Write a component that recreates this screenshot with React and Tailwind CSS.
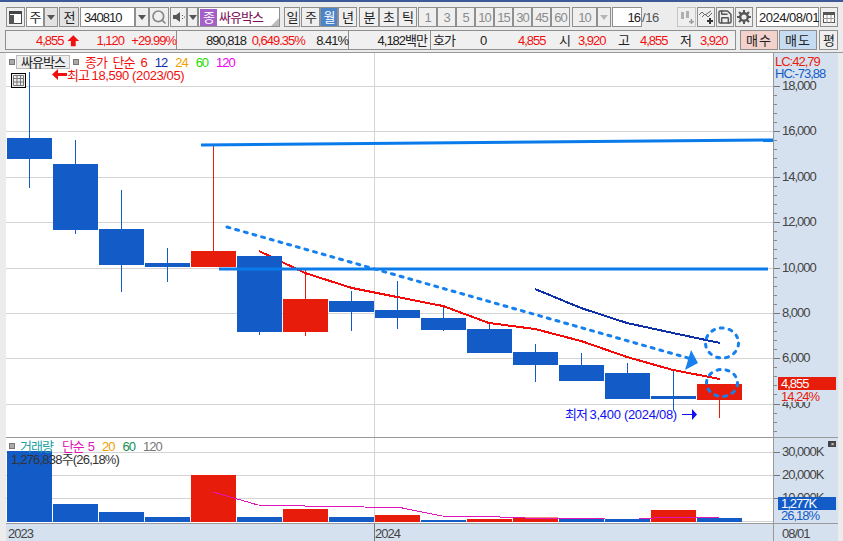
import { Search, Save } from 'lucide-react';

const BLUE = '#135cc8';
const RED = '#e81c0a';

const candles = [
    { x: 7, top: 138, bottom: 159, wick: [72, 188], c: BLUE },
    { x: 53, top: 164, bottom: 230, wick: [140, 234], c: BLUE },
    { x: 99, top: 229, bottom: 265, wick: [190, 292], c: BLUE },
    { x: 145, top: 263, bottom: 267, wick: [248, 282], c: BLUE },
    { x: 191, top: 251, bottom: 267, wick: [145, 267], c: RED },
    { x: 237, top: 256, bottom: 332, wick: [256, 335], c: BLUE },
    { x: 283, top: 299, bottom: 332, wick: [270, 336], c: RED },
    { x: 329, top: 301, bottom: 312, wick: [291, 331], c: BLUE },
    { x: 375, top: 310, bottom: 318, wick: [281, 329], c: BLUE },
    { x: 421, top: 318, bottom: 330, wick: [306, 331], c: BLUE },
    { x: 467, top: 329, bottom: 353, wick: [323, 353], c: BLUE },
    { x: 513, top: 352, bottom: 365, wick: [344, 382], c: BLUE },
    { x: 559, top: 365, bottom: 381, wick: [353, 381], c: BLUE },
    { x: 605, top: 373, bottom: 399, wick: [363, 399], c: BLUE },
    { x: 651, top: 396, bottom: 399, wick: [370, 410], c: BLUE },
    { x: 697, top: 384, bottom: 400, wick: [384, 418], c: RED },
];

const volumes = [
    [7, 451, BLUE], [53, 504, BLUE], [99, 512, BLUE], [145, 517, BLUE],
    [191, 475, RED], [237, 517, BLUE], [283, 509, RED], [329, 517, BLUE],
    [375, 515, RED], [421, 520, BLUE], [467, 519, RED], [513, 517.5, RED],
    [559, 518, BLUE], [605, 519, BLUE], [651, 510, RED], [697, 518, BLUE],
];

const priceGrid = [86, 131, 177, 222, 268, 313, 358, 404];
const priceLabels = ['18,000', '16,000', '14,000', '12,000', '10,000', '8,000', '6,000', '4,000'];
const volumeGrid = [452, 475, 498];
const volumeLabels = ['30,000K', '20,000K', '10,000K'];

function Btn({ w, bg = 'bg-[#efefef]', line = 'border-[#8f8f8f]', className = '', children }) {
    return (
        <div
            className={`flex h-[20px] shrink-0 items-center justify-center border ${line} ${bg} ${className}`}
            style={{ width: w }}
        >
            {children}
        </div>
    );
}

function Caret({ muted }) {
    return <div className={`h-0 w-0 border-x-[4px] border-t-[5px] border-x-transparent ${muted ? 'border-t-[#b5b5b5]' : 'border-t-[#555]'}`} />;
}

function ChartSvg() {
    const thick = candles[5];
    return (
        <svg className="absolute inset-0" width="767" height="384" viewBox="6 53 767 384">
            {priceGrid.map(y => (
                <line key={y} x1="6" x2="773" y1={y + 0.5} y2={y + 0.5} stroke="#d4d4d4" />
            ))}
            <line x1="374.5" x2="374.5" y1="53" y2="437" stroke="#d4d4d4" />
            {candles.map(k => (
                <g key={k.x}>
                    <line x1={k.x + 22.5} x2={k.x + 22.5} y1={k.wick[0]} y2={k.wick[1]} stroke={k.c} />
                    <rect x={k.x} y={k.top} width="45" height={k.bottom - k.top} fill={k.c} />
                </g>
            ))}
            <polyline fill="none" stroke="#f50a0a" strokeWidth="2" shapeRendering="crispEdges" points="259,251 282,262 305,273 352,288 397,297 443,306 489,323 535,329 581,341 627,357 673,370 720,379" />
            {/* this candle sits over the average line */}
            <rect x={thick.x} y={thick.top} width="45" height={thick.bottom - thick.top} fill={thick.c} />
            <polyline fill="none" stroke="#1030a8" strokeWidth="2" shapeRendering="crispEdges" points="535,289 581,308 627,323 673,333 720,343" />
            <line x1="201" y1="145" x2="773" y2="140" stroke="#0a7bea" strokeWidth="3" />
            <line x1="219" y1="269" x2="768" y2="269" stroke="#0a7bea" strokeWidth="3" />
            <line x1="227" y1="227" x2="688" y2="358" stroke="#1580ee" strokeWidth="3" strokeDasharray="3 6" strokeLinecap="round" />
            <polygon points="691,350 698,363 685,370" fill="#1580ee" />
            <ellipse cx="722" cy="343" rx="16.5" ry="15" fill="none" stroke="#1580ee" strokeWidth="3" strokeDasharray="3 6" strokeLinecap="round" />
            <ellipse cx="722" cy="383" rx="15.5" ry="13.5" fill="none" stroke="#1580ee" strokeWidth="3" strokeDasharray="3 6" strokeLinecap="round" />
        </svg>
    );
}

function VolumeSvg() {
    return (
        <svg className="absolute inset-0" width="767" height="85" viewBox="6 438 767 85">
            {volumeGrid.map(y => (
                <line key={y} x1="6" x2="773" y1={y + 0.5} y2={y + 0.5} stroke="#d4d4d4" />
            ))}
            <line x1="6" x2="773" y1="521.5" y2="521.5" stroke="#d4d4d4" />
            <line x1="374.5" x2="374.5" y1="438" y2="523" stroke="#d4d4d4" />
            {volumes.map(([x, top, c]) => (
                <rect key={x} x={x} y={top} width="45" height={522 - top} fill={c} />
            ))}
            <polyline fill="none" stroke="#e014b8" shapeRendering="crispEdges" points="213,492 258,505 328,506.5 400,507.5 442,516 500,517 525,518 560,518.5 605,519 639,519 662,517.5 719,517" />
        </svg>
    );
}

export default function App() {
    const periods = ['1', '3', '5', '10', '15', '30', '45', '60'];

    return (
        <div className="flex h-[541px] w-[843px] flex-col overflow-hidden bg-[#ececec] text-[13px] leading-none tracking-[-1px] text-[#222] font-['Liberation_Sans','Noto_Sans_CJK_KR',sans-serif]">
            <div className="h-[2px] bg-[#3d5a98]" />

            {/* toolbar */}
            <div className="mt-[5px] flex h-[20px] items-center pl-[6px]">
                <Btn w={19}>
                    <svg width="15" height="15" viewBox="0 0 15 15">
                        <rect x="1.5" y="1.5" width="12" height="12" fill="#fff" stroke="#444" />
                        <rect x="1" y="1" width="13" height="3" fill="#444" />
                        <rect x="1" y="5" width="5" height="9" fill="#555" />
                    </svg>
                </Btn>
                <Btn w={18} bg="bg-white" className="ml-px">주</Btn>
                <Btn w={14} bg="bg-[#e2e2e2]"><Caret /></Btn>
                <Btn w={20} bg="bg-[#e2e2e2]" className="ml-px">전</Btn>
                <div className="ml-px flex h-[20px] w-[55px] items-center border border-[#8f8f8f] bg-white pl-[3px]">340810</div>
                <Btn w={14}><Caret /></Btn>
                <Btn w={20}><Search size={16} className="text-[#888]" strokeWidth={2.5} /></Btn>
                <Btn w={17} className="ml-px">
                    <svg width="12" height="12" viewBox="0 0 12 12">
                        <path d="M0 4h3l4-3v10L3 8H0z" fill="#555" />
                        <path d="M9 4h1v1H9zM9 7h1v1H9zM11 5.500h1v1h-1z" fill="#555" />
                    </svg>
                </Btn>
                <Btn w={11}><Caret /></Btn>
                <div className="relative flex h-[20px] w-[82px] items-center border border-[#8f8f8f] bg-white pl-[1px]">
                    <div className="flex h-[17px] w-[17px] items-center justify-center bg-[#a55fc8] text-white">종</div>
                    <span className="ml-[2px] text-[#7a0e5a]">싸유박스</span>
                    <div className="absolute right-0 bottom-0 h-0 w-0 border-b-[8px] border-l-[8px] border-b-[#bbb] border-l-transparent" />
                </div>

                <div className="ml-[4px] flex">
                    <Btn w={16}>일</Btn>
                    <Btn w={19} className="ml-px">주</Btn>
                    <Btn w={18} bg="bg-[#4b84c8]" className="text-white">월</Btn>
                    <Btn w={19}>년</Btn>
                </div>
                <div className="ml-[2px] flex">
                    <Btn w={20}>분</Btn>
                    <Btn w={19}>초</Btn>
                    <Btn w={19}>틱</Btn>
                </div>
                <div className="ml-px flex text-[#8c8c8c]">
                    {periods.map(p => (
                        <Btn key={p} w={19}>{p}</Btn>
                    ))}
                </div>
                <Btn w={25} className="ml-[2px] text-[#8c8c8c]">10</Btn>
                <Btn w={14}><Caret muted /></Btn>
                <div className="ml-px flex h-[20px] w-[30px] items-center justify-end border border-[#8f8f8f] bg-white pr-[1px]">16</div>
                <span className="w-[35px] tracking-[-0.4px] text-[#555]">/16</span>
                <Btn w={19} line="border-[#c4c4c4]">
                    <svg width="15" height="14" viewBox="0 0 15 14">
                        <path d="M2 2h3v7H2zM7 1h3v7H7z" fill="#b0b0b0" />
                        <path d="M10 11h5v1.500h-5zM11.700 9h1.500v5h-1.500z" fill="#9a9a9a" />
                    </svg>
                </Btn>
                <Btn w={18} className="ml-px">
                    <svg width="15" height="14" viewBox="0 0 15 14">
                        <path d="M0 5l3-3 3 3 3-2 3-2M3 7l3-3 3 3 4-4" fill="none" stroke="#666" />
                        <path d="M8 10h6v2H8zM10 8h2v6h-2z" fill="#333" />
                    </svg>
                </Btn>
                <Btn w={18} className="ml-px"><Save size={16} className="text-[#555]" strokeWidth={2.2} /></Btn>
                <Btn w={18} className="ml-px">
                    <svg width="14" height="14" viewBox="0 0 14 14">
                        <circle cx="7" cy="7" r="3.800" fill="none" stroke="#555" strokeWidth="2.400" />
                        <path d="M7 0v3M7 11v3M0 7h3M11 7h3M2 2l2 2M10 10l2 2M12 2l-2 2M4 10l-2 2" stroke="#555" strokeWidth="2" />
                    </svg>
                </Btn>
                <div className="ml-[3px] flex h-[20px] w-[63px] items-center border border-[#8f8f8f] bg-white pl-[2px] tracking-[-0.5px]">2024/08/01</div>
                <Btn w={18} className="ml-px">
                    <svg width="12" height="11" viewBox="0 0 12 11">
                        <rect x="0.500" y="0.500" width="11" height="10" fill="#fff" stroke="#555" />
                        <rect x="0" y="0" width="12" height="3" fill="#555" />
                        <path d="M4 3v8M8 3v8M0 6.500h12" stroke="#999" />
                    </svg>
                </Btn>
            </div>

            {/* quote row */}
            <div className="mt-[3px] flex h-[20px] pl-[5px]">
                <div className="flex h-[20px] w-[172px] items-center border border-[#8f8f8f] bg-[#f0f0f0] text-[#f01010]">
                    <span className="ml-[30px] w-[32px]">4,855</span>
                    <svg width="13" height="13" viewBox="0 0 13 13">
                        <path d="M6.500 1L12.500 7H9v5.500H4V7H.5z" fill="#f01010" />
                    </svg>
                    <span className="ml-[17px] w-[36px]">1,120</span>
                    <span className="whitespace-nowrap">+29.99%</span>
                </div>
                <div className="flex h-[20px] w-[172px] items-center border border-l-0 border-[#8f8f8f] bg-[#f0f0f0]">
                    <span className="ml-[29px] w-[46px]">890,818</span>
                    <span className="w-[65px] text-[#f01010]">0,649.35%</span>
                    <span>8.41%</span>
                </div>
                <div className="flex h-[20px] w-[82px] items-center justify-end border border-l-0 border-[#8f8f8f] bg-[#f0f0f0] pr-[3px]">4,182백만</div>
                <div className="flex h-[20px] w-[305px] items-center border border-l-0 border-[#8f8f8f] bg-[#f0f0f0]">
                    <span className="ml-[2px] w-[47px]">호가</span>
                    <span className="w-[38px]">0</span>
                    <span className="w-[41px] text-[#f01010]">4,855</span>
                    <span className="w-[19px]">시</span>
                    <span className="w-[40px] text-[#f01010]">3,920</span>
                    <span className="w-[22px]">고</span>
                    <span className="w-[40px] text-[#f01010]">4,855</span>
                    <span className="w-[20px]">저</span>
                    <span className="text-[#f01010]">3,920</span>
                </div>
                <Btn w={38} bg="bg-[#f4d2cc]" className="ml-[4px] tracking-[1px]">매수</Btn>
                <Btn w={38} bg="bg-[#c6dcf2]" className="ml-px tracking-[1px]">매도</Btn>
                <Btn w={19} className="ml-[2px]">평</Btn>
            </div>

            {/* chart area */}
            <div className="mt-[2px] flex flex-1 flex-col border-t border-[#999] pl-[6px] pr-[5px]">
                <div className="flex h-[384px]">
                    <div className="relative w-[767px] bg-white">
                        <ChartSvg />
                        <div className="absolute left-[3px] top-[6px] h-[6px] w-[6px] border border-[#777] bg-[#aaa]" />
                        <div className="absolute left-[10px] top-[2px] flex h-[14px] w-[54px] items-center justify-center border border-[#bbb] bg-[#eee]">싸유박스</div>
                        <div className="absolute left-[67px] top-[6px] h-[6px] w-[6px] border border-[#777] bg-[#aaa]" />
                        <div className="absolute left-[79px] top-[3px] flex gap-[8px]">
                            <span className="mr-[-2px] text-[#f01010] [word-spacing:3px]">종가 단순</span>
                            <span className="text-[#f01010]">6</span>
                            <span className="text-[#1030a8]">12</span>
                            <span className="text-[#f0a000]">24</span>
                            <span className="text-[#22e000]">60</span>
                            <span className="text-[#f000f0]">120</span>
                        </div>
                        <div className="absolute left-[5px] top-[20px] flex h-[15px] w-[15px] items-center justify-center border border-black bg-[#eee]">
                            <svg width="11" height="11" viewBox="0 0 11 11">
                                <path d="M.5.500h10v10H.500zM4 .5v10M7.500.5v10M.5 3.500h10M.5 7h10" fill="none" stroke="#777" />
                            </svg>
                        </div>
                        <svg className="absolute left-[46px] top-[16px]" width="15" height="11" viewBox="0 0 15 11">
                            <path d="M0 5.500L6 0v4h9v3H6v4z" fill="#f01010" />
                        </svg>
                        <div className="absolute left-[61px] top-[16px] text-[#f01010]">최고 <span className="tracking-[-0.4px]">18,590 (2023/05)</span></div>
                        <div className="absolute left-[559px] top-[355px] text-[#1010f0]">최저 <span className="tracking-[-0.3px]">3,400 (2024/08)</span></div>
                        <svg className="absolute left-[676px] top-[356px]" width="15" height="11" viewBox="0 0 15 11">
                            <path d="M0 5h10V0l5 5.500L10 11V6H0z" fill="#1010f0" />
                        </svg>
                    </div>
                    <div className="relative w-[65px] border-l border-[#999] bg-[#d6e1ef]">
                        <div className="absolute left-[1px] top-[2px] text-[#e81c0a]">LC:42,79</div>
                        <div className="absolute left-[1px] top-[14px] text-[#135cc8]">HC:-73,88</div>
                        {priceGrid.map((y, i) => (
                            <div key={y}>
                                <div className="absolute left-0 h-px w-[6px] bg-[#777]" style={{ top: y - 53 }} />
                                <div className="absolute left-[8px] text-[#444]" style={{ top: y - 60 }}>{priceLabels[i]}</div>
                                {[9, 18, 27, 36].map(d => (
                                    <div key={d} className="absolute left-0 h-px w-[3px] bg-[#888]" style={{ top: y - 53 + d }} />
                                ))}
                            </div>
                        ))}
                        <div className="absolute left-[4px] top-[324px] flex h-[13px] w-[58px] items-center bg-[#e81c0a] pl-[3px] text-white">4,855</div>
                        <div className="absolute left-[4px] top-[337px] flex h-[12px] w-[58px] items-center bg-[#d6e1ef] pl-[3px] text-[#e81c0a]">14,24%</div>
                    </div>
                </div>

                <div className="flex h-[86px] border-t border-[#999]">
                    <div className="relative w-[767px] bg-white">
                        <VolumeSvg />
                        <div className="absolute left-[3px] top-[5px] h-[6px] w-[6px] border border-[#777] bg-[#aaa]" />
                        <div className="absolute left-[14px] top-[2px] flex gap-[8px]">
                            <span className="mr-[1px] text-[#20a0a0]">거래량</span>
                            <span className="mr-[-4px] text-[#e014b8]">단순</span>
                            <span className="text-[#e014b8]">5</span>
                            <span className="text-[#f0a000]">20</span>
                            <span className="text-[#109050]">60</span>
                            <span className="text-[#777]">120</span>
                        </div>
                        <div className="absolute left-[5px] top-[15px] tracking-[-0.8px] text-[#333]">1,276,838주(26,18%)</div>
                    </div>
                    <div className="relative w-[65px] border-l border-[#999] bg-[#d6e1ef]">
                        {volumeGrid.map((y, i) => (
                            <div key={y}>
                                <div className="absolute left-0 h-px w-[6px] bg-[#777]" style={{ top: y - 438 }} />
                                <div className="absolute left-[8px] text-[#444]" style={{ top: y - 445 }}>{volumeLabels[i]}</div>
                            </div>
                        ))}
                        <div className="absolute right-[2px] top-[3px] flex h-[6px] w-[8px] items-center justify-center bg-[#444] text-[6px] text-white">×</div>
                        <div className="absolute left-[4px] top-[59px] flex h-[13px] w-[58px] items-center bg-[#135cc8] pl-[3px] text-white">1,277K</div>
                        <div className="absolute left-[4px] top-[72px] flex h-[11px] w-[58px] items-center bg-[#d6e1ef] pl-[3px] text-[#135cc8]">26,18%</div>
                    </div>
                </div>

                <div className="flex flex-1 border-t border-[#999] bg-[#d6e1ef] text-[#444]">
                    <div className="relative w-[767px]">
                        <span className="absolute left-[2px] top-[3px]">2023</span>
                        <div className="absolute left-[368px] top-0 h-full w-px bg-[#777]" />
                        <span className="absolute left-[369px] top-[3px]">2024</span>
                    </div>
                    <div className="relative w-[65px] border-l border-[#999]">
                        <span className="absolute left-[8px] top-[3px]">08/01</span>
                    </div>
                </div>
            </div>
        </div>
    );
}
